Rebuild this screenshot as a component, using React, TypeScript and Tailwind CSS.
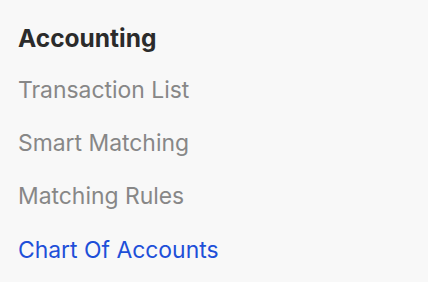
export default function App() {
  const items = ['Transaction List', 'Smart Matching', 'Matching Rules'];
  return (
    <div className="h-[282px] w-[428px] bg-[#f8f8f8] px-[18px] pt-[22.3px] font-['Inter',sans-serif]">
      <h2 className="text-[24.5px] leading-[32px] font-bold text-[#2b2b2b]">Accounting</h2>
      <ul className="mt-[19.5px] flex flex-col gap-[21.3px]">
        {items.map((label) => (
          <li key={label} className="text-[22.9px] leading-[32px] text-[#878787]">
            {label}
          </li>
        ))}
        <li className="text-[22.9px] leading-[32px] text-[#1e4fd8]">Chart Of Accounts</li>
      </ul>
    </div>
  );
}
